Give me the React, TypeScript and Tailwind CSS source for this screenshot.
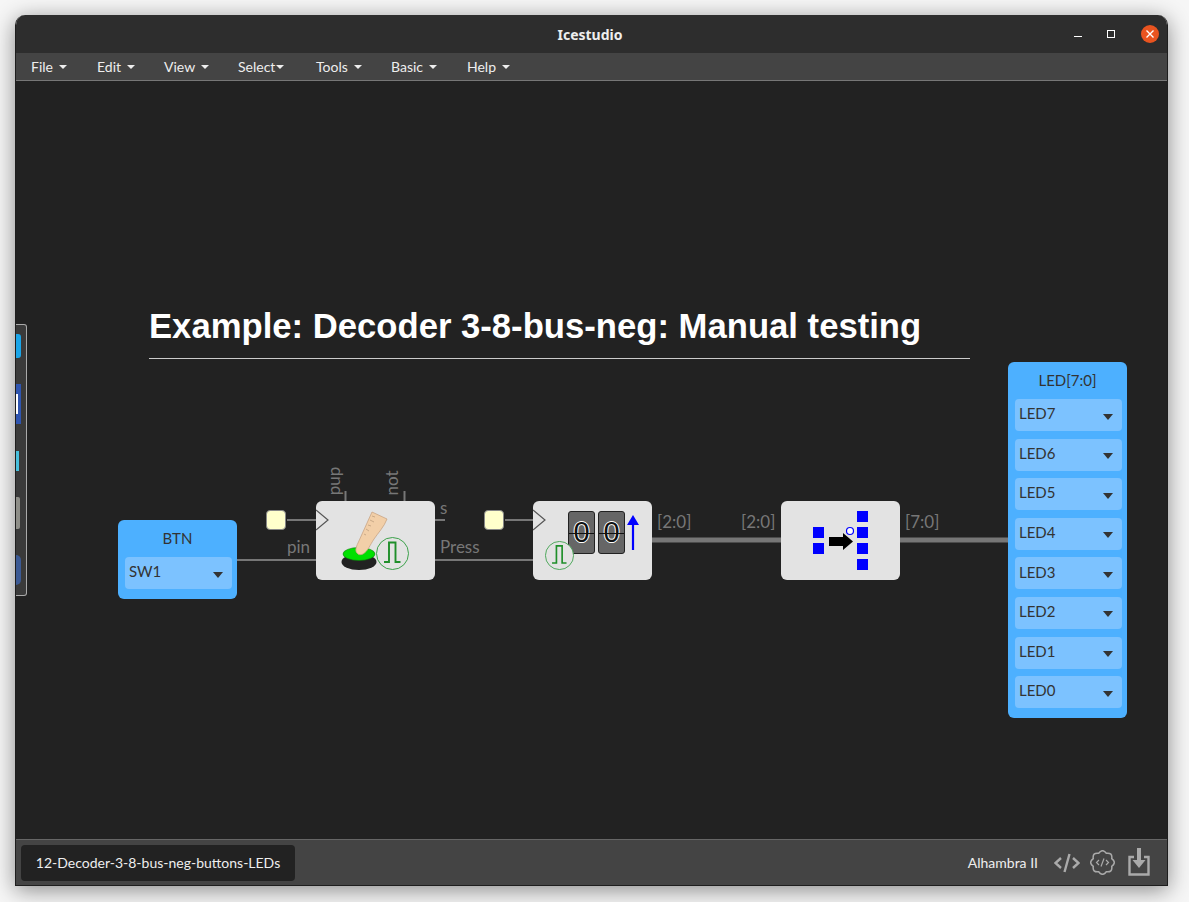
import type { ReactNode } from "react";

const font = { fontFamily: "Lato, 'Noto Sans', sans-serif" };

const menus = [
  { label: "File", w: "w-[66px] gap-[6px]" },
  { label: "Edit", w: "w-[67px] gap-[6px]" },
  { label: "View", w: "w-[74px] gap-[6px]" },
  { label: "Select", w: "w-[78px] gap-[1px]" },
  { label: "Tools", w: "w-[75px] gap-[6px]" },
  { label: "Basic", w: "w-[76px] gap-[6px]" },
  { label: "Help", w: "w-[70px] gap-[6px]" },
];

const leds = ["LED7", "LED6", "LED5", "LED4", "LED3", "LED2", "LED1", "LED0"];

// scalloped outline of the "verilog" gear in the footer
const gearPath = () => {
  const lobes = 8;
  let d = "";
  for (let i = 0; i < lobes; i++) {
    const a0 = (i / lobes) * Math.PI * 2 - Math.PI / 8;
    const a1 = ((i + 0.5) / lobes) * Math.PI * 2 - Math.PI / 8;
    const a2 = ((i + 1) / lobes) * Math.PI * 2 - Math.PI / 8;
    const p = (r: number, a: number) => `${(12.5 + r * Math.cos(a)).toFixed(2)} ${(12.5 + r * Math.sin(a)).toFixed(2)}`;
    if (i === 0) d += `M${p(10, a0)}`;
    d += `Q${p(14.4, a1)} ${p(10, a2)}`;
  }
  return d + "Z";
};

const Caret = ({ className }: { className: string }) => (
  <span className={`inline-block h-0 w-0 border-x-[4px] border-t-[4px] border-x-transparent ${className}`} />
);

const PinSelect = ({ label }: { label: string }) => (
  <div className="flex h-8 items-center justify-between rounded-[4px] bg-[#7cc2ff] pl-1 pr-[9px] text-[15px] text-[#333]">
    <span className="-mt-[3px]">{label}</span>
    <span className="mt-[3px] h-0 w-0 border-x-[5px] border-t-[6px] border-x-transparent border-t-[#333]" />
  </div>
);

const Clock = ({ size }: { size: number }) => (
  <svg width={size} height={size} viewBox="0 0 33 33" className="block">
    <circle cx="16.500" cy="16.500" r="16" fill="#e3e3e3" stroke="#2a9a3a" strokeWidth="0.9" />
    <path d="M8 25H13V5.500H19.500V25H24.500" fill="none" stroke="#1f8f2a" strokeWidth="1.9" />
  </svg>
);

const Block = ({ left, children }: { left: string; children?: ReactNode }) => (
  <div className={`absolute top-[420px] h-[79px] w-[119px] rounded-[6px] bg-[#e3e3e3] ${left}`}>{children}</div>
);

const FlipDigit = () => (
  <div className="relative flex h-[43px] w-[27px] items-center justify-center rounded-[3px] border border-[#222] bg-[#666] text-[29px] leading-none text-[#111] [font-family:'Liberation_Sans'] [text-shadow:-1px_0_#fff,1px_0_#fff,0_1px_#fff,0_-1px_#fff]">
    0
    <span className="absolute inset-x-0 top-[21px] h-px bg-[#111]" />
  </div>
);

const Label = ({ className, children }: { className: string; children: ReactNode }) => (
  <span className={`absolute text-[17px] leading-5 text-[#777] ${className}`}>{children}</span>
);

const Clk = ({ left }: { left: string }) => (
  <div className={`absolute top-[429px] h-5 w-5 rounded-[4px] border border-[#888] bg-[#ffffcc] ${left}`} />
);

export default function App() {
  return (
    <div className="h-[902px] w-[1189px] overflow-hidden bg-[#f6f6f6] pl-[15px] pt-[15px]" style={font}>
      <div className="flex h-[871px] w-[1153px] flex-col overflow-hidden rounded-t-[10px] border-x border-b border-[#1e1e1e] shadow-[0_4px_22px_rgba(0,0,0,0.45)]">
        <header className="grid h-[38px] shrink-0 grid-cols-[1fr_auto_1fr] items-center bg-[#2d2d2d] text-[14px] font-bold text-[#eee] [font-family:'Noto_Sans']">
          <span />
          <span className="pr-[3px]">Icestudio</span>
          <div className="flex items-center justify-end gap-[25px] pr-[8px]">
            <span className="mt-[5px] h-px w-2 bg-white" />
            <span className="h-2 w-2 border border-white" />
            <span className="ml-[1px] flex h-[18px] w-[18px] items-center justify-center rounded-full bg-[#e95420]">
              <svg width="8" height="8" viewBox="0 0 8 8" stroke="#fff" strokeWidth="1.4">
                <path d="M0.500 0.500L7.500 7.500M7.500 0.500L0.500 7.500" />
              </svg>
            </span>
          </div>
        </header>

        <nav className="flex h-7 shrink-0 items-center border-b border-[#777] bg-[#444] pl-[15px] text-[14px] text-[#eee]">
          {menus.map((m) => (
            <div key={m.label} className={`flex items-center ${m.w}`}>
              {m.label}
              <Caret className="border-t-[#eee]" />
            </div>
          ))}
        </nav>

        <main className="relative min-h-0 flex-1 bg-[#222]">
          <div className="absolute left-0 top-[243px] flex h-[272px] w-[11px] flex-col items-start justify-between rounded-r-[3px] border border-l-0 border-[#aaa] bg-[#3a3a3a] pb-[10px] pt-[9px]">
            <span className="h-6 w-[5px] rounded-r-[3px] bg-[#1aa5e8]" />
            <span className="flex h-10 w-[5px] items-center bg-[#2f55b0]">
              <span className="h-5 w-[2px] bg-white" />
            </span>
            <span className="h-5 w-[3px] bg-[#47bfdc]" />
            <span className="h-8 w-[4px] rounded-r-[2px] bg-[#8e8e88]" />
            <span className="h-[30px] w-[5px] rounded-r-full bg-[#3c5a94]" />
          </div>

          <h1 className="absolute left-[133px] top-[224px] w-[821px] whitespace-nowrap border-b border-[#ccc] pb-[11px] text-[34.67px] font-bold leading-[42px] text-white [font-family:'Liberation_Sans']">
            Example: Decoder 3-8-bus-neg: Manual testing
          </h1>

          <svg width="1151" height="758" className="absolute left-0 top-0">
            <g stroke="#777" strokeWidth="2" fill="none">
              <path d="M221 479H300M419 479H517M271 439H300M489 439H517M419 439H429M329.500 410V420M388.500 410V420" />
            </g>
            <path d="M636 459H765M884 459H992" stroke="#777" strokeWidth="5" />
          </svg>

          <Clk left="left-[250px]" />
          <Clk left="left-[468px]" />

          <Label className="left-[271px] top-[456px]">pin</Label>
          <Label className="left-[424px] top-[456px]">Press</Label>
          <Label className="left-[424px] top-[417px]">s</Label>
          <Label className="left-[641px] top-[431px]">[2:0]</Label>
          <Label className="left-[725px] top-[431px]">[2:0]</Label>
          <Label className="left-[889px] top-[431px]">[7:0]</Label>
          <Label className="left-[302px] top-[390px] w-8 -rotate-90 text-center">pup</Label>
          <Label className="left-[360px] top-[392px] w-8 -rotate-90 text-center">not</Label>

          <div className="absolute left-[102px] top-[439px] w-[119px] rounded-[6px] bg-[#4db0ff] pb-[10px] pl-[7px] pr-[5px] pt-2 text-[#333]">
            <div className="mb-[9px] pr-[2px] text-center text-[15px] leading-5">BTN</div>
            <PinSelect label="SW1" />
          </div>

          <Block left="left-[300px]">
            <svg width="119" height="79" viewBox="0 0 119 79" className="absolute left-0 top-0">
              <path d="M0 9L12 19L0 29" fill="#e3e3e3" stroke="#555" strokeWidth="1.2" />
              <ellipse cx="43" cy="61" rx="17.500" ry="8" fill="#222" />
              <ellipse cx="43" cy="53" rx="16" ry="6.500" fill="#00e000" stroke="#0a7a0a" strokeWidth="0.6" />
              <path d="M41 52C39 50 40 46 42 42L56 11L71 18C68 26 62 32 58 38C54 44 52 50 47 53C45 54 42 54 41 52Z" fill="#f2cfa8" stroke="#c9a584" strokeWidth="0.8" />
              <path d="M56 15L59 16M54 19L58 21M52 24L55 25M50 28L53 30M48 33L50 34" stroke="#b79a7a" strokeWidth="0.7" />
            </svg>
            <div className="absolute left-[60px] top-[36px]">
              <Clock size={33} />
            </div>
          </Block>

          <Block left="left-[517px]">
            <svg width="14" height="79" viewBox="0 0 14 79" className="absolute left-0 top-0">
              <path d="M0 9L12 19L0 29" fill="#e3e3e3" stroke="#555" strokeWidth="1.2" />
            </svg>
            <div className="absolute left-[35px] top-[10px] flex gap-[3px]">
              <FlipDigit />
              <FlipDigit />
            </div>
            <svg width="14" height="36" viewBox="0 0 14 36" className="absolute left-[93px] top-[14px]">
              <path d="M7 35V9" stroke="#0000ff" strokeWidth="2.2" />
              <path d="M1 10L7 0L13 10Z" fill="#0000ff" />
            </svg>
            <div className="absolute left-[12px] top-[40px]">
              <Clock size={29} />
            </div>
          </Block>

          <Block left="left-[765px]">
            <svg width="119" height="79" viewBox="0 0 119 79" className="absolute left-0 top-0">
              <g fill="#0000ff">
                <rect x="32" y="26" width="11" height="11" />
                <rect x="32" y="42" width="11" height="11" />
                <rect x="76" y="10" width="11" height="11" />
                <rect x="76" y="26" width="11" height="11" />
                <rect x="76" y="42" width="11" height="11" />
                <rect x="76" y="58" width="11" height="11" />
              </g>
              <path d="M48 36H62V32L72 40.500L62 49V45H48Z" fill="#000" />
              <circle cx="69" cy="30" r="3.500" fill="#fff" stroke="#0000ff" strokeWidth="1.2" />
            </svg>
          </Block>

          <div className="absolute left-[992px] top-[281px] h-[356px] w-[119px] rounded-[6px] bg-[#4db0ff] pl-[7px] pr-[5px] text-[#333]">
            <div className="pb-[9px] pr-[2px] pt-2 text-center text-[15px] leading-5">LED[7:0]</div>
            <div className="flex flex-col gap-[7.6px]">
              {leds.map((led) => (
                <PinSelect key={led} label={led} />
              ))}
            </div>
          </div>
        </main>

        <footer className="flex h-[46px] shrink-0 items-center border-t border-[#666] bg-[#444] pl-[5px] pr-[17px] text-[14px] text-[#eee]">
          <div className="flex h-9 w-[274px] items-center justify-center rounded-[4px] bg-[#222]">
            12-Decoder-3-8-bus-neg-buttons-LEDs
          </div>
          <span className="ml-auto mr-[16px]">Alhambra II</span>
          <svg width="26" height="22" viewBox="0 0 26 22" fill="none" stroke="#aaa" strokeWidth="2.4" className="mr-[10px]">
            <path d="M7 6L1.500 11L7 16M19 6L24.500 11L19 16M15.500 2L10.500 20" />
          </svg>
          <svg width="25" height="25" viewBox="0 0 25 25" fill="none" stroke="#aaa" className="mr-[13px]">
            <path d={gearPath()} strokeWidth="1.5" />
            <path d="M9 10L6.500 12.500L9 15M16 10L18.500 12.500L16 15M14 8.500L11 16.500" strokeWidth="1.2" />
          </svg>
          <svg width="22" height="28" viewBox="0 0 22 28" fill="none" className="mb-[1px]">
            <path d="M6 9H1.500V26.500H20.500V9H16" stroke="#aaa" strokeWidth="2.4" />
            <path d="M11 0V14" stroke="#aaa" strokeWidth="4" />
            <path d="M4.500 12H17.500L11 20Z" fill="#aaa" />
          </svg>
        </footer>
      </div>
    </div>
  );
}
